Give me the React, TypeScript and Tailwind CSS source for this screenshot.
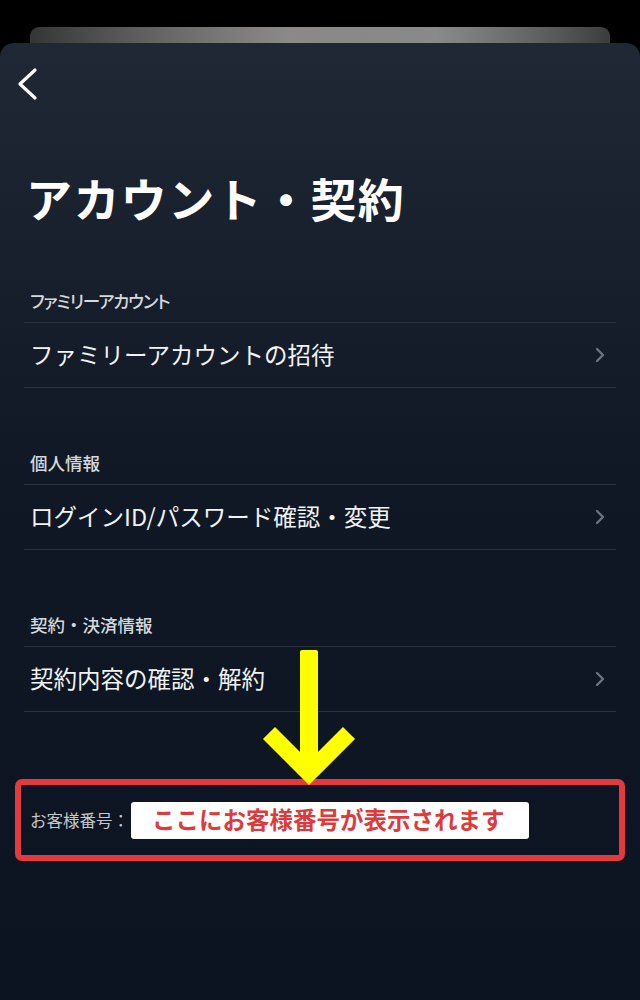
import { ChevronRight } from 'lucide-react';

const font = { fontFamily: '"Noto Sans CJK JP", "Noto Sans", sans-serif' };

interface Section {
    title: string;
    item: string;
    gap: string;
    tight?: boolean;
}

const sections: Section[] = [
    { title: 'ファミリーアカウント', item: 'ファミリーアカウントの招待', gap: 'h-[53px]', tight: true },
    { title: '個人情報', item: 'ログインID/パスワード確認・変更', gap: 'h-[96px]' },
    { title: '契約・決済情報', item: '契約内容の確認・解約', gap: 'h-[96px]' },
];

function Arrow() {
    return (
        <svg className="absolute left-[255px] top-[645px]" width="110" height="145" viewBox="255 645 110 145">
            <rect x="300" y="650" width="18" height="120" rx="2" fill="#ffff00" />
            <polyline
                points="269,733 309,773 349,733"
                fill="none"
                stroke="#ffff00"
                strokeWidth="17"
                strokeLinejoin="miter"
                strokeMiterlimit="4"
            />
        </svg>
    );
}

export default function App() {
    return (
        <div className="relative w-[640px] h-[1000px] bg-black overflow-hidden" style={font}>
            {/* card stacked behind */}
            <div className="mx-[30px] mt-[27px] h-[16px] rounded-t-[9px] bg-linear-to-r from-[#353535] via-[#7a7674] via-45% to-[#3c3c3c]">
                <div className="h-full rounded-t-[9px] bg-linear-to-r from-transparent via-[#a9a9a9]/60 via-70% to-transparent" />
            </div>

            {/* sheet */}
            <div className="h-[957px] rounded-t-[14px] bg-linear-to-b from-[#1f2834] via-[#0f1824] via-45% to-[#0b1420]">
                <div className="h-[82px] flex items-center pl-[16px]">
                    <svg width="24" height="34" viewBox="0 0 24 34">
                        <polyline
                            points="19,3 4,17 19,31"
                            fill="none"
                            stroke="white"
                            strokeWidth="3.2"
                            strokeLinecap="round"
                            strokeLinejoin="round"
                        />
                    </svg>
                </div>

                <div className="h-[144px] flex items-center px-[26px]">
                    <h1 className="text-[46px] leading-none font-bold text-white tracking-[1.4px]">アカウント・契約</h1>
                </div>

                {sections.map(s => (
                    <div key={s.title}>
                        <div className={`${s.gap} flex items-end px-[30px] pb-[9px]`}>
                            <p
                                className={`text-[17.5px] leading-[24px] font-medium text-[#d5d8dd] ${s.tight ? 'tracking-[-1.2px]' : ''}`}
                                style={s.tight ? { fontFeatureSettings: '"palt"' } : undefined}
                            >
                                {s.title}
                            </p>
                        </div>
                        <div className="mx-[24px] h-[66px] border-y border-[#29323e] flex items-center justify-between pl-[6px] pr-[4px]">
                            <span className="text-[23.5px] leading-none text-[#f1f2f4]">{s.item}</span>
                            <ChevronRight className="w-[24px] h-[24px] text-[#6b7380]" strokeWidth={2.4} />
                        </div>
                    </div>
                ))}

                {/* customer number annotation */}
                <div className="mx-[15px] mt-[67px] h-[82px] border-[6px] border-[#e23a3d] rounded-[7px] flex items-center pl-[9px]">
                    <span className="text-[16.5px] text-[#c4c8ce] leading-none">お客様番号：</span>
                    <div className="ml-[2px] w-[398px] h-[37px] bg-white rounded-[3px] flex items-center pl-[21px]">
                        <span className="text-[23.5px] font-bold text-[#e0393c] leading-none">
                            ここにお客様番号が表示されます
                        </span>
                    </div>
                </div>
            </div>

            <Arrow />
        </div>
    );
}
